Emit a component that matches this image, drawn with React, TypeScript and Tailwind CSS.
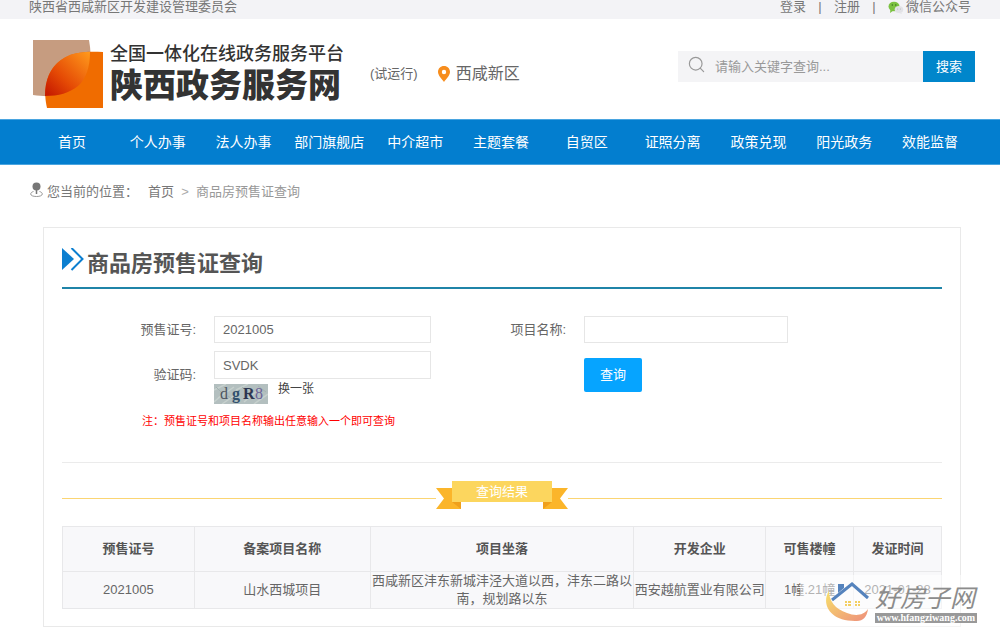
import { useState } from "react";
import { Search } from "lucide-react";

const navItems = [
  "首页",
  "个人办事",
  "法人办事",
  "部门旗舰店",
  "中介超市",
  "主题套餐",
  "自贸区",
  "证照分离",
  "政策兑现",
  "阳光政务",
  "效能监督",
];

const columns = [
  { title: "预售证号", width: "w-[15%]" },
  { title: "备案项目名称", width: "w-[20%]" },
  { title: "项目坐落", width: "w-[30%]" },
  { title: "开发企业", width: "w-[15%]" },
  { title: "可售楼幢", width: "w-[10%]" },
  { title: "发证时间", width: "w-[10%]" },
];

const rows = [
  [
    "2021005",
    "山水西城项目",
    "西咸新区沣东新城沣泾大道以西，沣东二路以南，规划路以东",
    "西安越航置业有限公司",
    "1幢.21幢",
    "2021-01-28",
  ],
];

function TopBar() {
  return (
    <div className="flex h-[19px] justify-between bg-[#f3f3f6] pl-[29px] pr-[29px] leading-[14px] text-[#777]">
      <span>陕西省西咸新区开发建设管理委员会</span>
      <div className="flex">
        <a href="#login">登录</a>
        <span className="w-7 text-center">|</span>
        <a href="#register">注册</a>
        <span className="w-7 text-center">|</span>
        <a href="#wechat" className="flex gap-0.5">
          <svg width="16" height="14" viewBox="0 0 16 14">
            <ellipse cx="6" cy="6.5" rx="5.5" ry="4.8" fill="#7cc242" />
            <path d="M2.5 9 L2 13 L5.5 10.5 Z" fill="#7cc242" />
            <ellipse cx="11" cy="9.6" rx="4.3" ry="3.5" fill="#e2e2e6" />
            <path d="M13 12.4 L14.2 14 L11 13 Z" fill="#e2e2e6" />
            <circle cx="4.3" cy="5" r="0.7" fill="#33691e" />
            <circle cx="7.8" cy="5" r="0.7" fill="#33691e" />
            <circle cx="9.7" cy="9" r="0.5" fill="#aaa" />
            <circle cx="12.3" cy="9" r="0.5" fill="#aaa" />
          </svg>
          微信公众号
        </a>
      </div>
    </div>
  );
}

function Logo() {
  return (
    <svg width="70" height="70" viewBox="0 0 70 70">
      <defs>
        <linearGradient id="leaf" x1="0" y1="1" x2="1" y2="0">
          <stop offset="0.05" stopColor="#c61a00" />
          <stop offset="0.4" stopColor="#e54a05" />
          <stop offset="1" stopColor="#ff9a1c" />
        </linearGradient>
      </defs>
      <path d="M0 1 H56 C60 22 56 38 45 47 C34 56 20 59 0 56 Z" fill="#c69c80" />
      <path d="M70 13 V69 H14 C9 48 15 30 28 21 C40 13 52 12 70 13 Z" fill="#f06c00" />
      <path d="M57 13 C57 28 53 40 45 47 C36 54 26 57 12 57 C12 41 17 29 28 21 C36 15 45 13 57 13 Z" fill="url(#leaf)" />
    </svg>
  );
}

function Header() {
  return (
    <header className="flex h-[100px] items-start justify-between pl-[33px] pr-[25px] pt-5">
      <div className="flex items-center">
        <Logo />
        <h1 className="ml-[7px] whitespace-nowrap text-[#333]">
          <span className="block text-[18px] font-medium leading-6">全国一体化在线政务服务平台</span>
          <span className="block text-[33px] font-black leading-10">陕西政务服务网</span>
        </h1>
        <span className="ml-[26px] whitespace-nowrap text-[#666]">(试运行)</span>
        <svg className="ml-5" width="12" height="16" viewBox="0 0 12 16">
          <path
            d="M6 0 C2.5 0 0 2.6 0 6 C0 9.5 4 13 6 16 C8 13 12 9.5 12 6 C12 2.6 9.5 0 6 0 Z M6 3.8 A2.2 2.2 0 1 1 6 8.2 A2.2 2.2 0 1 1 6 3.8 Z"
            fill="#f78d1d"
            fillRule="evenodd"
          />
        </svg>
        <span className="ml-1.5 whitespace-nowrap text-[16px] text-[#666]">西咸新区</span>
      </div>
      <form className="mt-3 flex h-[31px] w-[297px]" onSubmit={(e) => e.preventDefault()}>
        <label htmlFor="keyword" className="flex w-[37px] items-center bg-[#f4f4f6] pb-1 pl-[9px]">
          <Search size={19} strokeWidth={1.5} color="#999" />
        </label>
        <input
          id="keyword"
          type="text"
          aria-label="关键字"
          placeholder="请输入关键字查询..."
          className="min-w-0 flex-1 bg-[#f4f4f6] outline-none placeholder:text-[#999]"
        />
        <button className="w-[52px] bg-[#0086cb] text-white">搜索</button>
      </form>
    </header>
  );
}

function Nav() {
  return (
    <nav className="grid h-[46px] grid-cols-11 items-center border-y border-[#4aa5e0] bg-[#037ecf] pl-[29px] pr-[27px]">
      {navItems.map((item) => (
        <a key={item} href="#nav" className="whitespace-nowrap text-center text-[14px] text-white">
          {item}
        </a>
      ))}
    </nav>
  );
}

function Breadcrumb() {
  return (
    <div className="flex h-[62px] items-start pl-[30px] pt-[17px] leading-5 text-[#777]">
      <svg width="13" height="16" viewBox="0 0 13 16">
        <path
          d="M3.5 9.5 C1.6 10 0.7 11 0.7 12 C0.7 13.5 3 14.5 6.5 14.5 C10 14.5 12.3 13.5 12.3 12 C12.3 11 11.4 10 9.5 9.5"
          fill="none"
          stroke="#999"
        />
        <circle cx="6.5" cy="4.5" r="4" fill="#777" />
        <path d="M6.5 8 V12" stroke="#777" strokeWidth="1.5" />
      </svg>
      <span className="ml-1 w-[101px]">您当前的位置：</span>
      <a href="#home">首页</a>
      <span className="w-[22px] text-center text-[#aaa]">&gt;</span>
      <span className="text-[#999]">商品房预售证查询</span>
    </div>
  );
}

function QueryForm() {
  const [certNo, setCertNo] = useState("2021005");
  const [code, setCode] = useState("SVDK");
  const [project, setProject] = useState("");

  return (
    <form className="mt-[27px]" onSubmit={(e) => e.preventDefault()}>
      <div className="grid grid-cols-[134px_217fr_117px_204fr_136fr] gap-x-[18px] gap-y-2">
        <label htmlFor="certNo" className="text-right leading-[27px]">
          预售证号:
        </label>
        <input
          id="certNo"
          type="text"
          value={certNo}
          onChange={(e) => setCertNo(e.target.value)}
          className="h-[27px] w-full border border-[#e6e6e6] px-2 outline-none"
        />
        <label htmlFor="project" className="text-right leading-[27px]">
          项目名称:
        </label>
        <input
          id="project"
          type="text"
          value={project}
          onChange={(e) => setProject(e.target.value)}
          className="h-[27px] w-full border border-[#e6e6e6] px-2 outline-none"
        />
        <span />
        <label htmlFor="code" className="text-right leading-[48px]">
          验证码:
        </label>
        <div>
          <input
            id="code"
            type="text"
            value={code}
            onChange={(e) => setCode(e.target.value)}
            className="block h-7 w-full border border-[#e6e6e6] px-2 outline-none"
          />
          <div className="flex items-start">
            <Captcha />
            <button type="button" className="ml-2.5 text-[12px] leading-5 text-[#444]">
              换一张
            </button>
          </div>
        </div>
        <span />
        <div className="flex h-12 items-center">
          <button className="h-[34px] w-[58px] rounded-xs bg-[#06a4ff] text-white">查询</button>
        </div>
      </div>
      <p className="ml-20 mt-2 text-[11px] leading-[18px] text-[#f00]">
        注：预售证号和项目名称输出任意输入一个即可查询
      </p>
    </form>
  );
}

function Captcha() {
  return (
    <svg className="mt-[5px]" width="54" height="20" viewBox="0 0 54 20">
      <rect width="54" height="20" fill="#b3bfbf" />
      <path
        d="M0 6 L12 0 M4 14 L20 3 M8 20 L24 9 M22 6 L34 0 M30 18 L46 4 M40 20 L54 10 M0 18 L8 11"
        stroke="#c6d0cd"
        strokeWidth="1.5"
      />
      <path d="M2 3 L8 9 M14 12 L22 18 M28 3 L38 12 M44 2 L52 8" stroke="#a3b2b1" />
      <g fontFamily="Liberation Serif, serif" fontSize="16">
        <text x="6" y="15" fill="#4d5560">d</text>
        <text x="18" y="15" fill="#31506e" fontWeight="bold">g</text>
        <text x="29" y="15" fill="#2c3550" fontWeight="bold">R</text>
        <text x="41" y="15" fill="#6a5f96">8</text>
      </g>
    </svg>
  );
}

function ResultRibbon() {
  return (
    <div className="mt-[18px] flex items-start">
      <span className="mt-[17px] h-px flex-1 bg-[#fbd573]" />
      <div className="relative h-7 w-[132px]">
        <svg width="132" height="28" viewBox="0 0 132 28">
          <path d="M0 7 H25 V28 H0 L8 17.5 Z M132 7 H107 V28 H132 L124 17.5 Z" fill="#fbb52a" />
          <path d="M16 21 H25 V28 Z M116 21 H107 V28 Z" fill="#f0a01c" />
          <rect x="16" width="100" height="21" fill="#fcd65e" />
        </svg>
        <h3 className="absolute inset-x-0 top-0 text-center leading-[21px] text-white">查询结果</h3>
      </div>
      <span className="mt-[17px] h-px flex-1 bg-[#fbd573]" />
    </div>
  );
}

function ResultTable() {
  return (
    <table className="mt-[17px] w-full table-fixed border-collapse bg-[#f8f8fa] text-center">
      <thead>
        <tr className="h-[45px]">
          {columns.map((col) => (
            <th key={col.title} className={`${col.width} border border-[#e8e8ea] font-bold text-[#555]`}>
              {col.title}
            </th>
          ))}
        </tr>
      </thead>
      <tbody>
        {rows.map((row) => (
          <tr key={row[0]}>
            {row.map((cell) => (
              <td key={cell} className="border border-[#e8e8ea] leading-[18px]">
                {cell}
              </td>
            ))}
          </tr>
        ))}
      </tbody>
    </table>
  );
}

function Watermark() {
  return (
    <div className="pointer-events-none absolute bottom-0 right-0 flex h-[52px] w-[200px] bg-white/50 pl-[25px] pt-1">
      <svg width="46" height="44" viewBox="0 0 46 44">
        <defs>
          <linearGradient id="swoosh" x1="0" y1="0" x2="1" y2="1">
            <stop offset="0" stopColor="#f7e06a" />
            <stop offset="1" stopColor="#ee8f7c" />
          </linearGradient>
        </defs>
        <path d="M4 12 C-4 24 4 43 32 42 C38 42 42 38 43 30 C38 37 30 37 22 34 C10 30 4 22 4 12 Z" fill="url(#swoosh)" />
        <path d="M7 21 L27 5 L43 19" fill="none" stroke="#5583bd" strokeWidth="3" />
        <path d="M13 5 H19 V9 L13 14 Z" fill="#5583bd" />
        <path d="M20 22 h2 v2 h-2 z M23 22 h3 v2 h-3 z M20 25 h2 v2 h-2 z M23 25 h3 v2 h-3 z" fill="#f3cf62" />
        <path d="M30 22 h2 v2 h-2 z M33 22 h2 v2 h-2 z M30 25 h2 v2 h-2 z M33 25 h2 v2 h-2 z" fill="#f3cf62" />
      </svg>
      <div className="ml-1 w-[102px] pt-1">
        <p className="whitespace-nowrap text-[25px] italic leading-[30px] text-[#8c8c8c]">好房子网</p>
        <p className="h-2.5 bg-[#999] text-center font-['Liberation_Serif',serif] text-[10px] font-bold leading-[10px] text-white">
          www.hfangziwang.com
        </p>
      </div>
    </div>
  );
}

export default function App() {
  return (
    <div
      lang="zh-CN"
      className="relative min-w-[960px] bg-white font-['Liberation_Sans','Noto_Sans_CJK_SC',sans-serif] text-[13px] text-[#666]"
    >
      <TopBar />
      <Header />
      <Nav />
      <Breadcrumb />
      <main className="ml-[43px] mr-[39px] border border-[#e9e9e9] px-[18px] pb-[17px]">
        <div className="flex items-start border-b-2 border-[#1f84a8] pb-[7px] pt-5">
          <svg width="22" height="24" viewBox="0 0 22 24">
            <path d="M0 0 L12 11 L0 22 Z" fill="#0c7fd0" />
            <path d="M9.5 0 L20.5 11 L9.5 22" fill="none" stroke="#0c7fd0" strokeWidth="2" />
          </svg>
          <h2 className="ml-[3px] text-[22px] font-bold leading-8 text-[#555]">商品房预售证查询</h2>
        </div>
        <QueryForm />
        <hr className="mt-8 border-[#ebebeb]" />
        <ResultRibbon />
        <ResultTable />
      </main>
      <Watermark />
    </div>
  );
}
